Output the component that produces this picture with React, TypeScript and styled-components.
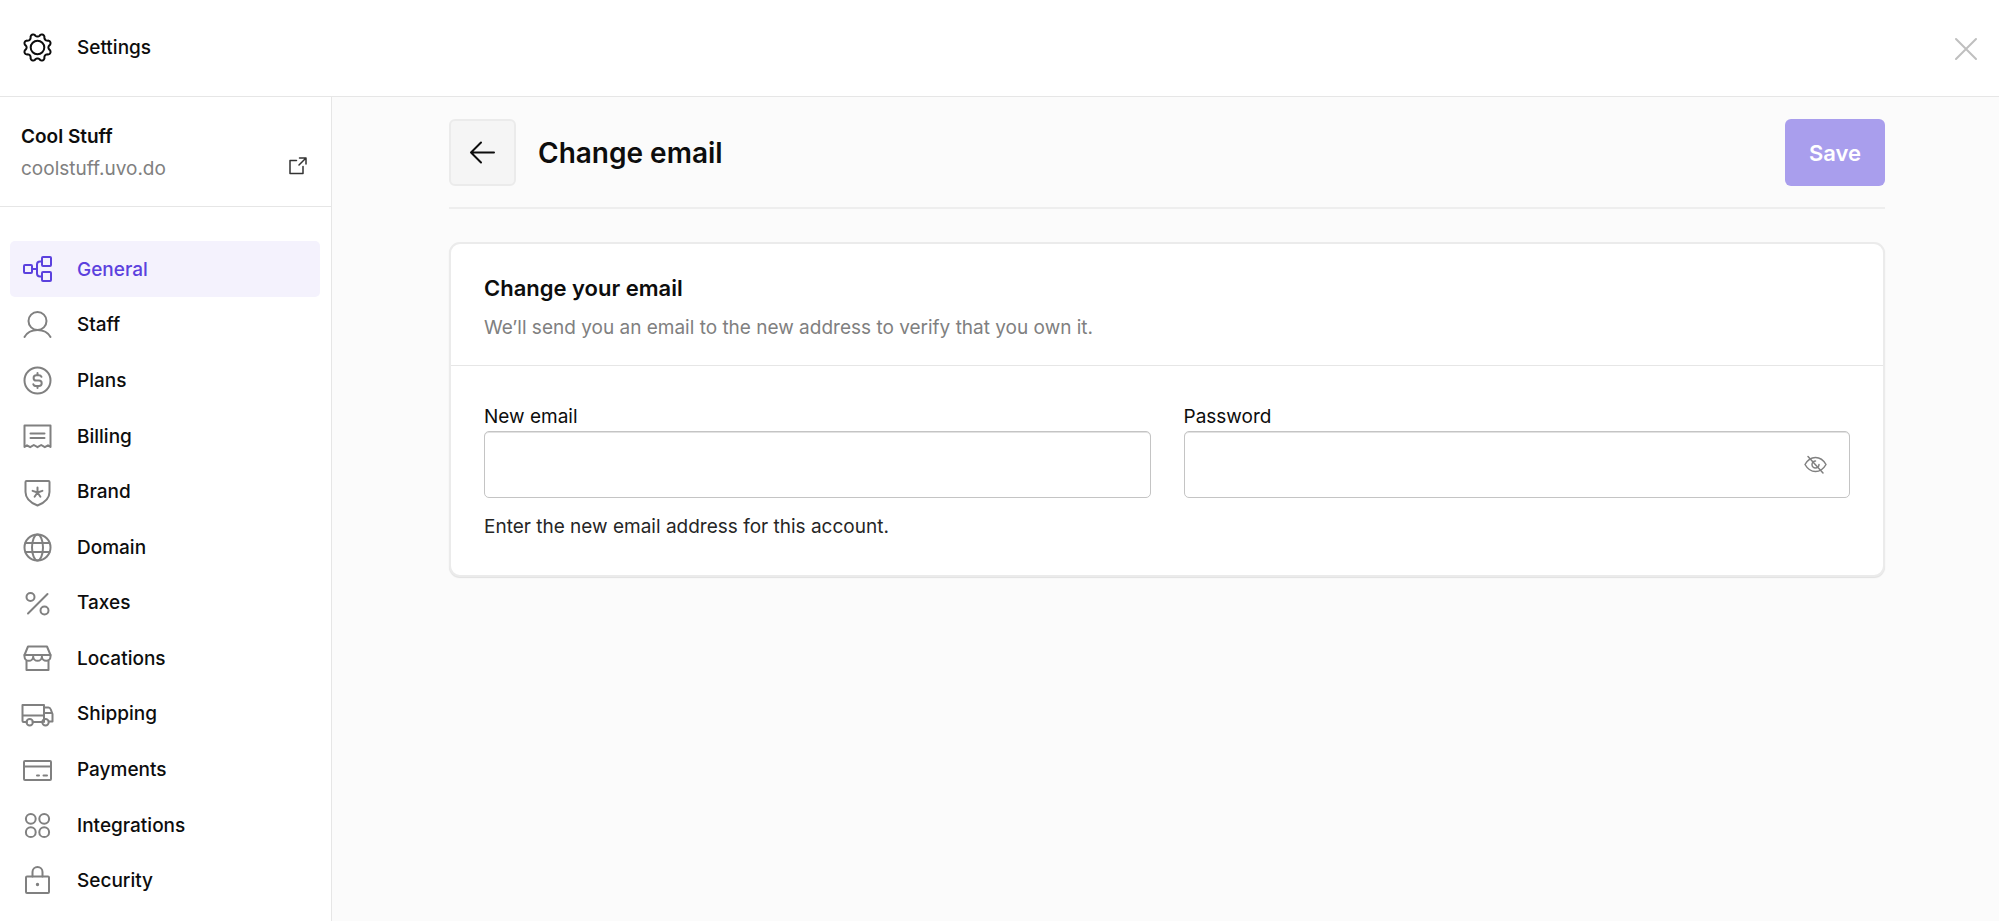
import React from 'react';
import styled, { createGlobalStyle } from 'styled-components';

const Global = createGlobalStyle`
  *, *::before, *::after { box-sizing: border-box; }
  body {
    margin: 0;
    background: #fbfbfb;
    color: #0d0d0d;
    font-family: Inter, "Liberation Sans", sans-serif;
  }
  h1, h2, p, ul { margin: 0; padding: 0; }
  button, input { font: inherit; color: inherit; }
`;

const Page = styled.div`
  min-height: 100vh;
  display: flex;
  flex-direction: column;
`;

const TopBar = styled.header`
  height: 97px;
  display: flex;
  align-items: center;
  gap: 22px;
  padding: 0 20px;
  background: #fff;
  border-bottom: 1px solid #e6e6e6;
`;

const TopTitle = styled.span`
  flex: 1;
  font-size: 19px;
  line-height: 28px;
  font-weight: 500;
`;

const CloseButton = styled.button`
  display: flex;
  padding: 0;
  border: 0;
  background: none;
  color: #bfbfbf;
  cursor: pointer;
`;

const Columns = styled.div`
  flex: 1;
  display: flex;
`;

const Sidebar = styled.aside`
  flex: none;
  width: 332px;
  background: #fff;
  border-right: 1px solid #e6e6e6;
`;

const Store = styled.div`
  height: 110px;
  display: flex;
  align-items: flex-end;
  justify-content: space-between;
  padding: 0 24px 21px 21px;
  border-bottom: 1px solid #e6e6e6;
`;

const StoreName = styled.p`
  font-size: 19px;
  line-height: 32px;
  font-weight: 600;
`;

const StoreHost = styled.p`
  font-size: 19px;
  line-height: 32px;
  color: #808080;
`;

const StoreLink = styled.a`
  display: flex;
  margin-bottom: 10px;
  color: #333;
`;

const NavList = styled.ul`
  list-style: none;
  min-height: 667px;
  margin: 34px 11px 14px 10px;
  display: grid;
  grid-auto-rows: 1fr;
`;

const NavLink = styled.a<{ $active?: boolean }>`
  height: 100%;
  display: flex;
  align-items: center;
  gap: 22px;
  padding: 2px 0 0 10px;
  border-radius: 5px;
  font-size: 19px;
  line-height: 28px;
  font-weight: 500;
  text-decoration: none;
  color: ${(p) => (p.$active ? '#5b41de' : '#0d0d0d')};
  background: ${(p) => (p.$active ? '#f4f2fd' : 'transparent')};

  svg { color: ${(p) => (p.$active ? '#5b41de' : '#808080')}; }
`;

const Main = styled.main`
  flex: 1;
  padding: 22px 114px 40px 117px;
`;

const Heading = styled.div`
  display: flex;
  align-items: center;
  gap: 22px;
  padding-bottom: 21px;
  border-bottom: 2px solid #eee;
`;

const BackButton = styled.button`
  width: 67px;
  height: 67px;
  display: grid;
  place-items: center;
  padding: 0;
  border: 2px solid #ebebeb;
  border-radius: 6px;
  background: #f5f5f5;
  cursor: pointer;
`;

const PageTitle = styled.h1`
  flex: 1;
  font-size: 28px;
  line-height: 34px;
  font-weight: 600;
`;

const SaveButton = styled.button`
  height: 67px;
  padding: 0 24px;
  border: 0;
  border-radius: 6px;
  background: #a99eed;
  color: #fff;
  font-size: 22px;
  font-weight: 600;
`;

const Card = styled.section`
  margin-top: 33px;
  border: 2px solid #ebebeb;
  border-radius: 11px;
  background: #fff;
  box-shadow: 0 1px 1px #e0e0e0;
`;

const CardHead = styled.div`
  padding: 26px 33px 19px;
  border-bottom: 1px solid #e6e6e6;
`;

const CardTitle = styled.h2`
  font-size: 22px;
  line-height: 36px;
  font-weight: 600;
`;

const CardText = styled.p`
  margin-top: 4px;
  font-size: 19px;
  line-height: 36px;
  color: #808080;
`;

const Fields = styled.form`
  display: grid;
  grid-template-columns: 1fr 1fr;
  gap: 33px;
  align-items: start;
  padding: 37px 33px 32px;
`;

const Field = styled.div`
  display: flex;
  flex-direction: column;
`;

const Label = styled.label`
  font-size: 19px;
  line-height: 28px;
`;

const InputBox = styled.div`
  height: 67px;
  display: flex;
  align-items: center;
  border: 1px solid #c4c4c4;
  border-radius: 5px;
  background: #fff;
  box-shadow: inset 0 1px 0 #e2e2e2;
`;

const Input = styled.input`
  flex: 1;
  min-width: 0;
  height: 100%;
  padding: 0 16px;
  border: 0;
  background: transparent;
  font-size: 19px;
  outline: none;
`;

const RevealButton = styled.button`
  display: flex;
  margin-right: 22px;
  padding: 0;
  border: 0;
  background: none;
  color: #808080;
  cursor: pointer;
`;

const Hint = styled.p`
  margin-top: 13px;
  font-size: 19px;
  line-height: 32px;
  color: #262626;
`;

type IconProps = { size?: number; stroke?: number; children: React.ReactNode };

const Icon = ({ size = 35, stroke = 2, children }: IconProps) => (
  <svg
    width={size}
    height={size}
    viewBox={`0 0 ${size} ${size}`}
    fill="none"
    stroke="currentColor"
    strokeWidth={stroke}
    strokeLinecap="round"
    strokeLinejoin="round"
    aria-hidden="true"
  >
    {children}
  </svg>
);

const gearPath = (() => {
  const points: string[] = [];
  for (let i = 0; i <= 144; i += 1) {
    const angle = (i / 144) * Math.PI * 2;
    const wave = Math.cos(8 * angle);
    const radius = 12.4 - 1.5 * Math.sign(wave) * Math.pow(Math.abs(wave), 0.7);
    points.push(`${(17.5 + radius * Math.cos(angle)).toFixed(2)} ${(16.5 + radius * Math.sin(angle)).toFixed(2)}`);
  }
  return `M${points.join('L')}Z`;
})();

const items: { name: string; icon: React.ReactNode }[] = [
  {
    name: 'General',
    icon: (
      <>
        <rect x="4" y="13" width="8" height="8" rx="1" />
        <rect x="22" y="5" width="9" height="9" rx="1" />
        <rect x="22" y="20" width="9" height="9" rx="1" />
        <path d="M12 17H17M22 9.500H20Q17 9.500 17 12.500V21.500Q17 24.500 20 24.500H22" />
      </>
    ),
  },
  {
    name: 'Staff',
    icon: (
      <>
        <circle cx="17.500" cy="13" r="9" />
        <path d="M4.500 29C7 24.500 12 22 17.500 22S28 24.500 30.500 29" />
      </>
    ),
  },
  {
    name: 'Plans',
    icon: (
      <>
        <circle cx="17.500" cy="17.500" r="13" />
        <path d="M21.500 13.800Q20.800 12.200 18.800 12.200H16.300A2.700 2.700 0 0 0 16.300 17.600H19A2.700 2.700 0 0 1 19 23H16.300Q13.800 23 13.300 21.200M17.500 10V12M17.500 23V25" />
      </>
    ),
  },
  {
    name: 'Billing',
    icon: (
      <>
        <path d="M4.500 28V6.500H30.500V28L28 26.300L24.800 28.200L21.200 26L17.500 28.200L13.800 26L10.200 28.200L7 26.300Z" />
        <path d="M10.500 14.500H24.500M10.500 19H24.500" />
      </>
    ),
  },
  {
    name: 'Brand',
    icon: (
      <>
        <path d="M6.500 6H28.500Q29.500 6 29.500 7V17C29.500 24 24 28 17.500 30.500C11 28 5.500 24 5.500 17V7Q5.500 6 6.500 6Z" />
        <path d="M17.500 17.500V12.500M17.500 17.500L12.600 15.900M17.500 17.500L22.400 15.900M17.500 17.500L14.600 21.700M17.500 17.500L20.400 21.700" />
      </>
    ),
  },
  {
    name: 'Domain',
    icon: (
      <>
        <circle cx="17.500" cy="17.500" r="13" />
        <ellipse cx="17.500" cy="17.500" rx="5.500" ry="13" />
        <path d="M5.500 13H29.500M5.500 22H29.500" />
      </>
    ),
  },
  {
    name: 'Taxes',
    icon: (
      <>
        <circle cx="10.500" cy="11" r="4" />
        <circle cx="24.500" cy="24.500" r="4" />
        <path d="M27.500 8L8 27.500" />
      </>
    ),
  },
  {
    name: 'Locations',
    icon: (
      <>
        <path d="M8 5.500H27L30.500 14V15.500A4.300 4.300 0 0 1 21.900 15.500A4.300 4.300 0 0 1 13.200 15.500A4.300 4.300 0 0 1 4.500 15.500V14Z" />
        <path d="M4.500 14H30.500M6.500 20V29H28.500V20" />
      </>
    ),
  },
  {
    name: 'Shipping',
    icon: (
      <>
        <path d="M7 25H3.500Q2.500 25 2.500 24V8H24V25M12.500 25H22.500M2.500 18.500H24" />
        <path d="M24 10.500H28.500Q30 10.500 30.800 12.500L32.500 17V24.500H29M25.500 16H32" />
        <circle cx="9.700" cy="25.300" r="3.200" />
        <circle cx="25.500" cy="25.300" r="3.200" />
      </>
    ),
  },
  {
    name: 'Payments',
    icon: (
      <>
        <rect x="4" y="8" width="27" height="19" rx="1" />
        <path d="M4 13.500H31M17 22.500H19M23.500 22.500H27" />
      </>
    ),
  },
  {
    name: 'Integrations',
    icon: (
      <>
        <circle cx="10.800" cy="10.800" r="4.900" />
        <circle cx="24.200" cy="10.800" r="4.900" />
        <circle cx="10.800" cy="24.200" r="4.900" />
        <circle cx="24.200" cy="24.200" r="4.900" />
      </>
    ),
  },
  {
    name: 'Security',
    icon: (
      <>
        <rect x="6" y="12.500" width="23" height="16.500" rx="1" />
        <path d="M12.500 12.500V8A5 5 0 0 1 22.500 8V12.500" />
        <circle cx="17.500" cy="20.500" r="0.700" fill="currentColor" />
      </>
    ),
  },
];

export default function App() {
  return (
    <Page>
      <Global />
      <TopBar>
        <Icon>
          <path d={gearPath} />
          <circle cx="17.500" cy="16.500" r="6.800" />
        </Icon>
        <TopTitle>Settings</TopTitle>
        <CloseButton type="button" aria-label="Close">
          <Icon size={27}>
            <path d="M4 4L24 24M24 4L4 24" />
          </Icon>
        </CloseButton>
      </TopBar>
      <Columns>
        <Sidebar>
          <Store>
            <div>
              <StoreName>Cool Stuff</StoreName>
              <StoreHost>coolstuff.uvo.do</StoreHost>
            </div>
            <StoreLink href="#store" aria-label="Open store">
              <Icon size={18} stroke={1.5}>
                <path d="M7.500 3.500H1V16.500H14V9.500M10.500 1H17V7M17 1L10 8" />
              </Icon>
            </StoreLink>
          </Store>
          <nav aria-label="Settings">
            <NavList>
              {items.map(({ name, icon }, index) => (
                <li key={name}>
                  <NavLink href={`#${name.toLowerCase()}`} $active={index === 0}>
                    <Icon>{icon}</Icon>
                    {name}
                  </NavLink>
                </li>
              ))}
            </NavList>
          </nav>
        </Sidebar>
        <Main>
          <Heading>
            <BackButton type="button" aria-label="Back">
              <Icon size={27}>
                <path d="M25 13.500H2M12 3.500L2 13.500L12 23.500" />
              </Icon>
            </BackButton>
            <PageTitle>Change email</PageTitle>
            <SaveButton type="submit" form="change-email">Save</SaveButton>
          </Heading>
          <Card>
            <CardHead>
              <CardTitle>Change your email</CardTitle>
              <CardText>We’ll send you an email to the new address to verify that you own it.</CardText>
            </CardHead>
            <Fields id="change-email">
              <Field>
                <Label htmlFor="new-email">New email</Label>
                <InputBox>
                  <Input id="new-email" type="email" aria-describedby="new-email-hint" />
                </InputBox>
                <Hint id="new-email-hint">Enter the new email address for this account.</Hint>
              </Field>
              <Field>
                <Label htmlFor="password">Password</Label>
                <InputBox>
                  <Input id="password" type="password" />
                  <RevealButton type="button" aria-label="Show password">
                    <Icon size={23} stroke={1.5}>
                      <path d="M1 11.500Q5 4.500 11.500 4.500T22 11.500Q18 18.500 11.500 18.500T1 11.500Z" />
                      <path d="M15 11.500A3.500 3.500 0 1 1 11.500 8" />
                      <path d="M4 3.500L19 20" />
                    </Icon>
                  </RevealButton>
                </InputBox>
              </Field>
            </Fields>
          </Card>
        </Main>
      </Columns>
    </Page>
  );
}
